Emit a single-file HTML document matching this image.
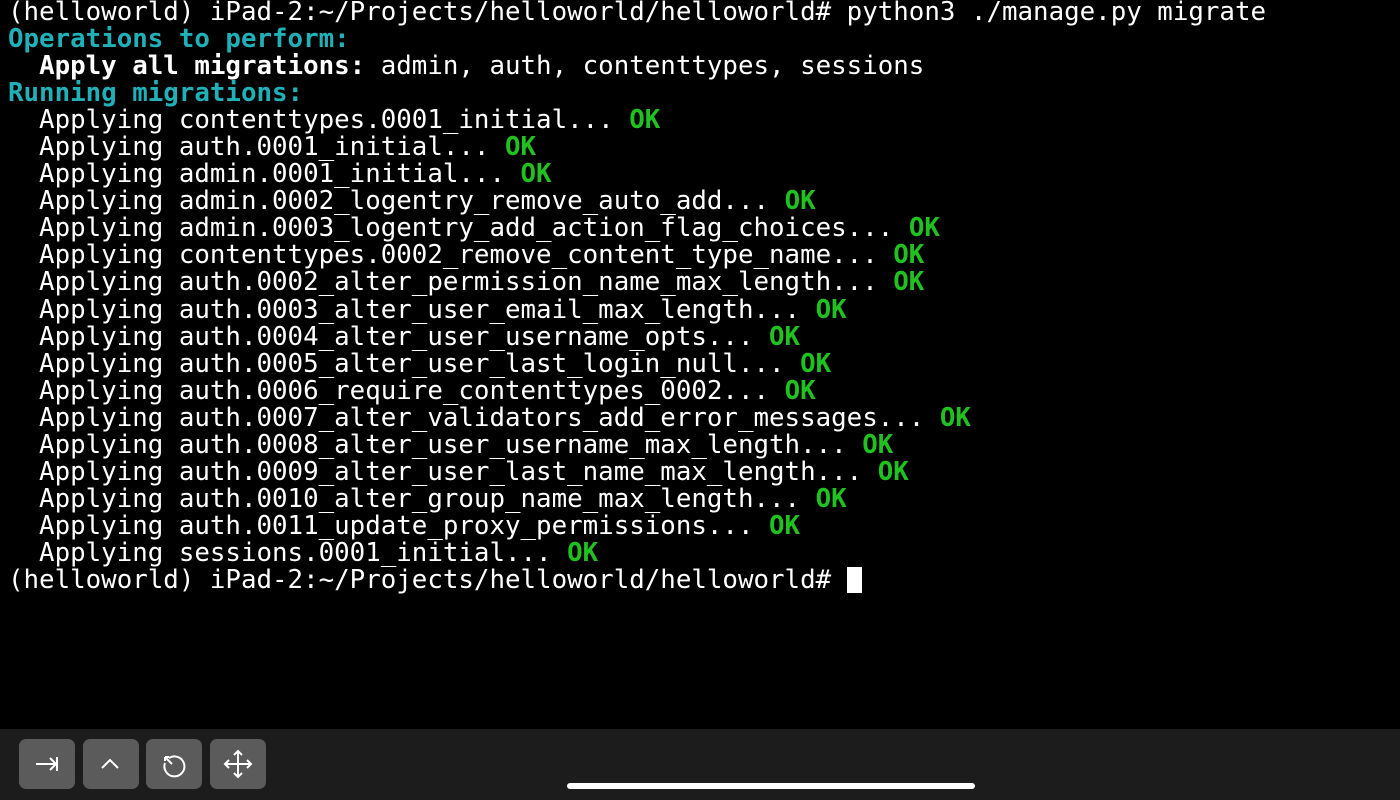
<!DOCTYPE html>
<html><head><meta charset="utf-8"><style>
html,body{margin:0;padding:0;background:#000;width:1400px;height:800px;overflow:hidden}
pre{margin:0;position:absolute;left:8px;top:-1px;font-family:"DejaVu Sans Mono","Liberation Mono",monospace;font-size:25.8px;line-height:27.05px;color:#fff;white-space:pre}
.c{color:#1fb0b8;font-weight:bold}.b{font-weight:bold}.g{color:#1fc21f;font-weight:bold}
.bar{position:absolute;left:0;top:729px;width:1400px;height:71px;background:#1c1c1c}
.btn{position:absolute;top:739px;width:56px;height:50px;background:#5b5b5b;border-radius:7px}
.btn svg{position:absolute;left:0;top:0}
.home{position:absolute;left:567px;top:783px;width:408px;height:6px;border-radius:3px;background:#fff}
.cur{display:inline-block;width:15px;height:26px;background:#fff;vertical-align:-5px}
</style></head><body>
<pre>(helloworld) iPad-2:~/Projects/helloworld/helloworld# python3 ./manage.py migrate
<span class="c">Operations to perform:</span>
  <span class="b">Apply all migrations:</span> admin, auth, contenttypes, sessions
<span class="c">Running migrations:</span>
  Applying contenttypes.0001_initial... <span class="g">OK</span>
  Applying auth.0001_initial... <span class="g">OK</span>
  Applying admin.0001_initial... <span class="g">OK</span>
  Applying admin.0002_logentry_remove_auto_add... <span class="g">OK</span>
  Applying admin.0003_logentry_add_action_flag_choices... <span class="g">OK</span>
  Applying contenttypes.0002_remove_content_type_name... <span class="g">OK</span>
  Applying auth.0002_alter_permission_name_max_length... <span class="g">OK</span>
  Applying auth.0003_alter_user_email_max_length... <span class="g">OK</span>
  Applying auth.0004_alter_user_username_opts... <span class="g">OK</span>
  Applying auth.0005_alter_user_last_login_null... <span class="g">OK</span>
  Applying auth.0006_require_contenttypes_0002... <span class="g">OK</span>
  Applying auth.0007_alter_validators_add_error_messages... <span class="g">OK</span>
  Applying auth.0008_alter_user_username_max_length... <span class="g">OK</span>
  Applying auth.0009_alter_user_last_name_max_length... <span class="g">OK</span>
  Applying auth.0010_alter_group_name_max_length... <span class="g">OK</span>
  Applying auth.0011_update_proxy_permissions... <span class="g">OK</span>
  Applying sessions.0001_initial... <span class="g">OK</span>
(helloworld) iPad-2:~/Projects/helloworld/helloworld# <span class="cur"></span></pre>
<div class="bar"></div>
<div class="btn" style="left:19px"><svg width="56" height="50" fill="none" stroke="#fff" stroke-width="2"><path d="M17 25H37M31 19L37 25L31 31M38 18V32"/></svg></div>
<div class="btn" style="left:83px"><svg width="56" height="50" fill="none" stroke="#fff" stroke-width="2"><path d="M19 29L27 21L35 29"/></svg></div>
<div class="btn" style="left:146px"><svg width="56" height="50" fill="none" stroke="#fff" stroke-width="2"><path d="M23 19A10 10 0 1 1 19 24"/><path d="M19 18L26 25M19 18V22M19 18H23"/></svg></div>
<div class="btn" style="left:210px"><svg width="56" height="50" fill="none" stroke="#fff" stroke-width="2"><path d="M28 12V38M15 25H41M24 16L28 12L32 16M24 34L28 38L32 34M19 21L15 25L19 29M37 21L41 25L37 29"/></svg></div>
<div class="home"></div>
</body></html>
